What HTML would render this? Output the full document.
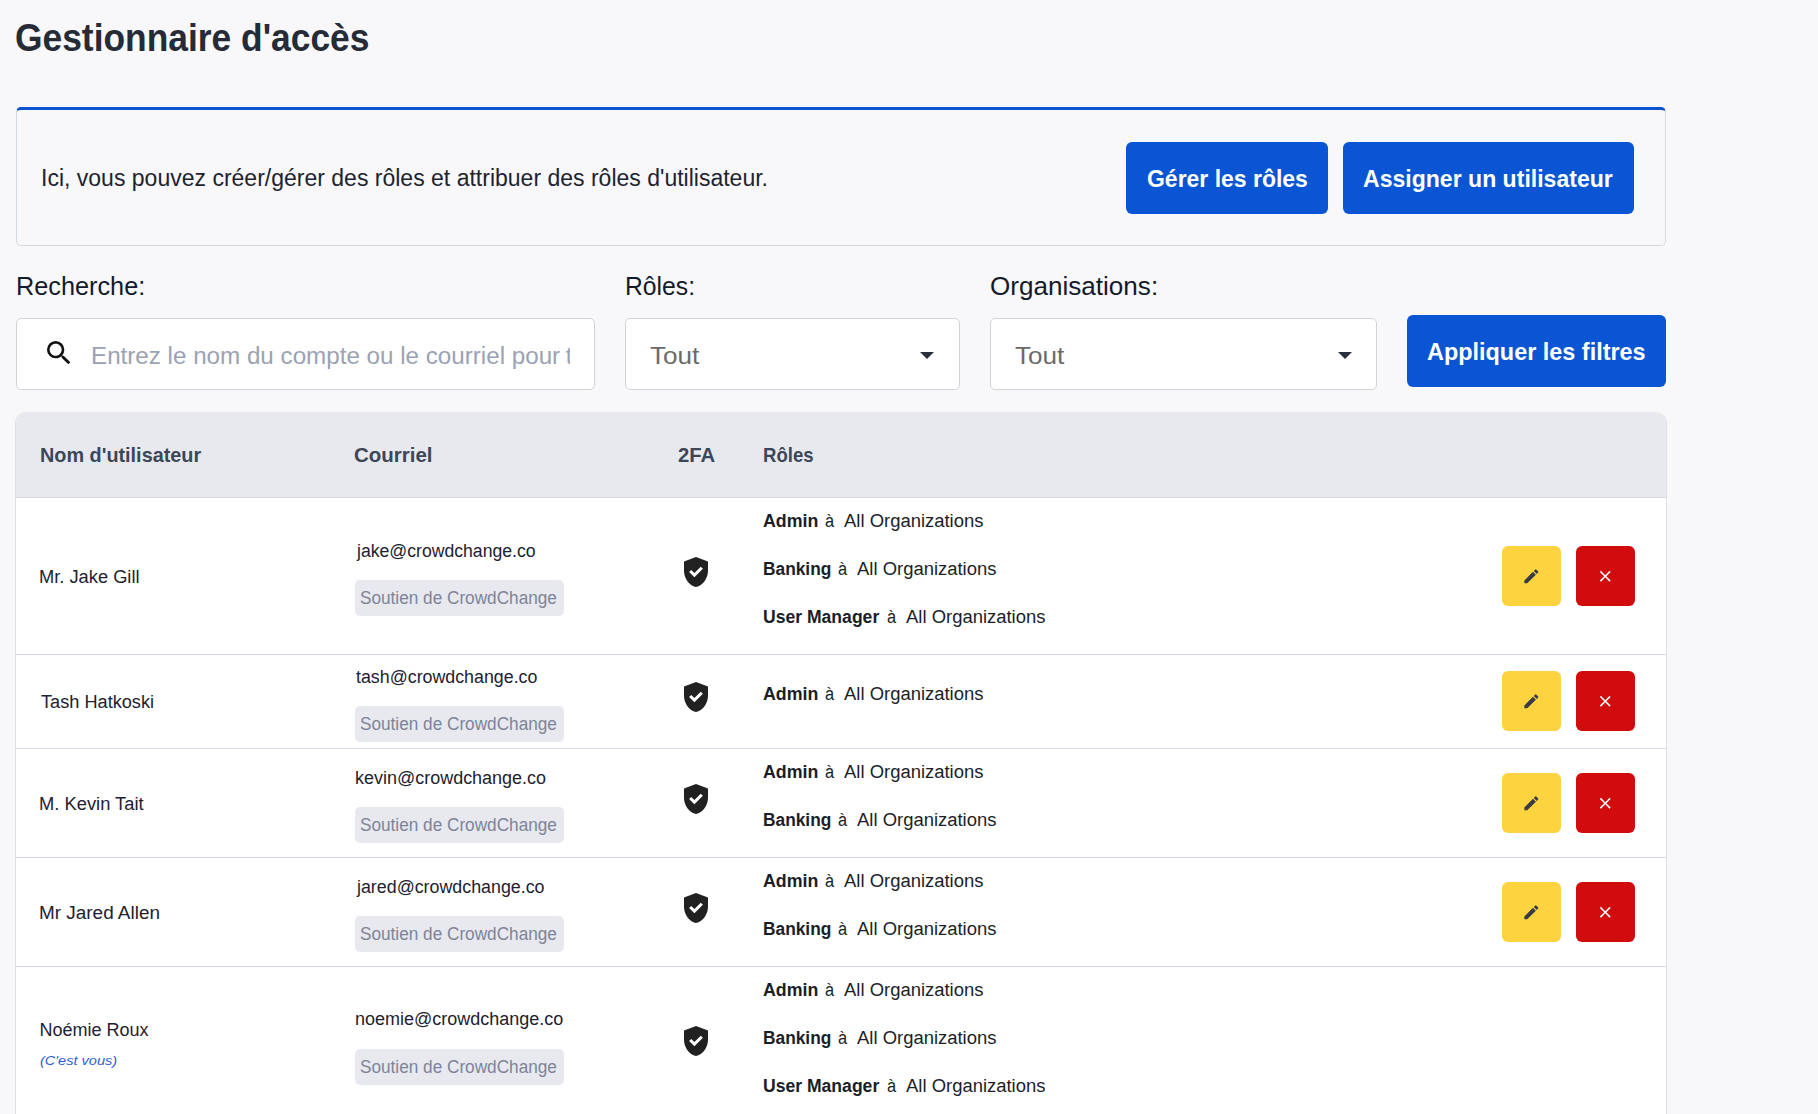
<!DOCTYPE html>
<html><head><meta charset="utf-8"><title>Gestionnaire d'accès</title>
<style>
html,body{margin:0;padding:0;}
body{width:1818px;height:1114px;overflow:hidden;background:#f8f8fa;position:relative;font-family:"Liberation Sans", sans-serif;}
.tx{position:absolute;white-space:pre;line-height:1;transform-origin:0 0;}
.box{position:absolute;box-sizing:border-box;}
#info{left:16px;top:107px;width:1650px;height:139px;border:1px solid #d3d9e1;border-top:3px solid #0b55d4;border-radius:5px;background:#f8f8fa;}
.btn{position:absolute;background:#0955d3;border-radius:6px;}
.inp{position:absolute;box-sizing:border-box;background:#fff;border:1px solid #d2d3d8;border-radius:5px;height:72px;top:318px;}
#table{position:absolute;left:16px;top:413px;width:1650px;height:760px;background:#fff;border-radius:10px 10px 0 0;box-shadow:0 1px 0 0 #dfe1e8, 1px 0 0 0 #dfe1e8, -1px 0 0 0 #dfe1e8, 0 -1px 0 0 #e6e8ed, 0 0 3px rgba(20,30,60,.07);overflow:hidden;}
#thead{position:absolute;left:0;top:0;width:100%;height:84px;background:#e8e9ee;border-bottom:1px solid #d6d9e0;}
.sep{position:absolute;left:16px;width:1650px;height:1px;background:#d5dae3;}
.badge{position:absolute;left:355px;width:209px;height:36px;border-radius:5px;background:#e8e9ee;}
.shield{position:absolute;left:678.2px;fill:#212121;}
.rb{position:absolute;width:59px;height:60px;border-radius:6px;display:flex;align-items:center;justify-content:center;}
.edit{left:1502px;background:#fdd43f;}
.del{left:1576px;background:#d20c0c;}
.arrow{position:absolute;width:0;height:0;border-left:7.3px solid transparent;border-right:7.3px solid transparent;border-top:7.5px solid #2a2f3b;top:352px;}
#clip{position:absolute;left:17px;top:319px;width:553px;height:70px;overflow:hidden;}
</style></head><body>
<div id="info" class="box"></div>
<div class="btn" style="left:1126px;top:142px;width:202px;height:72px"></div>
<div class="btn" style="left:1343px;top:142px;width:291px;height:72px"></div>
<div class="inp" style="left:16px;width:579px"></div>
<div class="inp" style="left:625px;width:335px"></div>
<div class="inp" style="left:990px;width:387px"></div>
<div class="arrow" style="left:919.8px"></div>
<div class="arrow" style="left:1337.5px"></div>
<svg style="position:absolute;left:42.5px;top:336.8px" width="32" height="32" viewBox="0 0 24 24"><path fill="#111" d="M15.5 14h-.79l-.28-.27A6.47 6.47 0 0 0 16 9.5 6.5 6.5 0 1 0 9.5 16c1.61 0 3.09-.59 4.23-1.57l.27.28v.79l5 4.99L20.49 19l-4.99-5zm-6 0C7.01 14 5 11.99 5 9.5S7.01 5 9.5 5 14 7.01 14 9.5 11.99 14 9.5 14z"/></svg>
<div class="btn" style="left:1407px;top:315px;width:259px;height:72px"></div>
<div id="table"><div id="thead"></div></div>
<div class="sep" style="top:654px"></div>
<div class="sep" style="top:748px"></div>
<div class="sep" style="top:857px"></div>
<div class="sep" style="top:966px"></div>
<div class=badge style='top:580px'></div><svg class=shield style='top:554.0px' viewBox='0 0 24 24' width='36' height='36'><path d="M12 2 4 5v6.09c0 5.05 3.41 9.76 8 10.91 4.59-1.15 8-5.86 8-10.91V5l-8-3zm-1.06 13.54L7.4 12l1.41-1.41 2.12 2.12 4.24-4.24 1.41 1.41-5.64 5.66z"/></svg><div class='rb edit' style='top:546px'><svg viewBox='0 0 24 24' width='18.7' height='18.7'><path fill='#3a3b45' d='M3 17.25V21h3.75L17.81 9.94l-3.75-3.75L3 17.25zM20.71 7.04a1 1 0 0 0 0-1.41l-2.34-2.34a1 1 0 0 0-1.41 0l-1.83 1.83 3.75 3.75 1.83-1.83z'/></svg></div><div class='rb del' style='top:546px'><svg viewBox='0 0 24 24' width='18.5' height='18.5'><path fill='#fff' d='M19 6.41 17.59 5 12 10.59 6.41 5 5 6.41 10.59 12 5 17.59 6.41 19 12 13.41 17.59 19 19 17.59 13.41 12z'/></svg></div><div class=badge style='top:706px'></div><svg class=shield style='top:679.0px' viewBox='0 0 24 24' width='36' height='36'><path d="M12 2 4 5v6.09c0 5.05 3.41 9.76 8 10.91 4.59-1.15 8-5.86 8-10.91V5l-8-3zm-1.06 13.54L7.4 12l1.41-1.41 2.12 2.12 4.24-4.24 1.41 1.41-5.64 5.66z"/></svg><div class='rb edit' style='top:671px'><svg viewBox='0 0 24 24' width='18.7' height='18.7'><path fill='#3a3b45' d='M3 17.25V21h3.75L17.81 9.94l-3.75-3.75L3 17.25zM20.71 7.04a1 1 0 0 0 0-1.41l-2.34-2.34a1 1 0 0 0-1.41 0l-1.83 1.83 3.75 3.75 1.83-1.83z'/></svg></div><div class='rb del' style='top:671px'><svg viewBox='0 0 24 24' width='18.5' height='18.5'><path fill='#fff' d='M19 6.41 17.59 5 12 10.59 6.41 5 5 6.41 10.59 12 5 17.59 6.41 19 12 13.41 17.59 19 19 17.59 13.41 12z'/></svg></div><div class=badge style='top:807px'></div><svg class=shield style='top:781.0px' viewBox='0 0 24 24' width='36' height='36'><path d="M12 2 4 5v6.09c0 5.05 3.41 9.76 8 10.91 4.59-1.15 8-5.86 8-10.91V5l-8-3zm-1.06 13.54L7.4 12l1.41-1.41 2.12 2.12 4.24-4.24 1.41 1.41-5.64 5.66z"/></svg><div class='rb edit' style='top:773px'><svg viewBox='0 0 24 24' width='18.7' height='18.7'><path fill='#3a3b45' d='M3 17.25V21h3.75L17.81 9.94l-3.75-3.75L3 17.25zM20.71 7.04a1 1 0 0 0 0-1.41l-2.34-2.34a1 1 0 0 0-1.41 0l-1.83 1.83 3.75 3.75 1.83-1.83z'/></svg></div><div class='rb del' style='top:773px'><svg viewBox='0 0 24 24' width='18.5' height='18.5'><path fill='#fff' d='M19 6.41 17.59 5 12 10.59 6.41 5 5 6.41 10.59 12 5 17.59 6.41 19 12 13.41 17.59 19 19 17.59 13.41 12z'/></svg></div><div class=badge style='top:916px'></div><svg class=shield style='top:890.0px' viewBox='0 0 24 24' width='36' height='36'><path d="M12 2 4 5v6.09c0 5.05 3.41 9.76 8 10.91 4.59-1.15 8-5.86 8-10.91V5l-8-3zm-1.06 13.54L7.4 12l1.41-1.41 2.12 2.12 4.24-4.24 1.41 1.41-5.64 5.66z"/></svg><div class='rb edit' style='top:882px'><svg viewBox='0 0 24 24' width='18.7' height='18.7'><path fill='#3a3b45' d='M3 17.25V21h3.75L17.81 9.94l-3.75-3.75L3 17.25zM20.71 7.04a1 1 0 0 0 0-1.41l-2.34-2.34a1 1 0 0 0-1.41 0l-1.83 1.83 3.75 3.75 1.83-1.83z'/></svg></div><div class='rb del' style='top:882px'><svg viewBox='0 0 24 24' width='18.5' height='18.5'><path fill='#fff' d='M19 6.41 17.59 5 12 10.59 6.41 5 5 6.41 10.59 12 5 17.59 6.41 19 12 13.41 17.59 19 19 17.59 13.41 12z'/></svg></div><div class=badge style='top:1049px'></div><svg class=shield style='top:1023.0px' viewBox='0 0 24 24' width='36' height='36'><path d="M12 2 4 5v6.09c0 5.05 3.41 9.76 8 10.91 4.59-1.15 8-5.86 8-10.91V5l-8-3zm-1.06 13.54L7.4 12l1.41-1.41 2.12 2.12 4.24-4.24 1.41 1.41-5.64 5.66z"/></svg>
<span class=tx style='left:15.16px;top:19.00px;font-size:38.5px;font-weight:700;font-style:normal;color:#252b37;transform:scaleX(0.9188)'>Gestionnaire d'accès</span><span class=tx style='left:41.00px;top:167.00px;font-size:23px;font-weight:400;font-style:normal;color:#1e2330;transform:scaleX(1.0004)'>Ici, vous pouvez créer/gérer des rôles et attribuer des rôles d'utilisateur.</span><span class=tx style='left:1146.66px;top:167.00px;font-size:24.5px;font-weight:700;font-style:normal;color:#ffffff;transform:scaleX(0.9376)'>Gérer les rôles</span><span class=tx style='left:1362.96px;top:167.00px;font-size:24.5px;font-weight:700;font-style:normal;color:#ffffff;transform:scaleX(0.9409)'>Assigner un utilisateur</span><span class=tx style='left:15.86px;top:273.00px;font-size:26px;font-weight:400;font-style:normal;color:#131a2a;transform:scaleX(0.9721)'>Recherche:</span><span class=tx style='left:625.40px;top:273.00px;font-size:26px;font-weight:400;font-style:normal;color:#131a2a;transform:scaleX(0.9500)'>Rôles:</span><span class=tx style='left:989.50px;top:273.00px;font-size:26px;font-weight:400;font-style:normal;color:#131a2a;transform:scaleX(1.0030)'>Organisations:</span><div id='clip'><span class=tx style='left:74.44px;top:26.00px;font-size:23.5px;font-weight:400;font-style:normal;color:#9aa2b3;transform:scaleX(1.0291)'>Entrez le nom du compte ou le courriel pour</span><span class=tx style='left:548.64px;top:26.00px;font-size:23.5px;color:#9aa2b3'>t</span></div><span class=tx style='left:650.20px;top:345.00px;font-size:23.5px;font-weight:400;font-style:normal;color:#6a6a6a;transform:scaleX(1.1114)'>Tout</span><span class=tx style='left:1015.20px;top:345.00px;font-size:23.5px;font-weight:400;font-style:normal;color:#6a6a6a;transform:scaleX(1.1114)'>Tout</span><span class=tx style='left:1426.64px;top:340.00px;font-size:24.5px;font-weight:700;font-style:normal;color:#ffffff;transform:scaleX(0.9559)'>Appliquer les filtres</span><span class=tx style='left:40.06px;top:444.00px;font-size:21px;font-weight:700;font-style:normal;color:#3b4759;transform:scaleX(0.9441)'>Nom d'utilisateur</span><span class=tx style='left:354.12px;top:444.00px;font-size:21px;font-weight:700;font-style:normal;color:#3b4759;transform:scaleX(0.9756)'>Courriel</span><span class=tx style='left:677.84px;top:444.00px;font-size:21px;font-weight:700;font-style:normal;color:#3b4759;transform:scaleX(0.9649)'>2FA</span><span class=tx style='left:762.92px;top:444.00px;font-size:21px;font-weight:700;font-style:normal;color:#3b4759;transform:scaleX(0.8839)'>Rôles</span><span class=tx style='left:39.48px;top:568.00px;font-size:18px;font-weight:400;font-style:normal;color:#1d2130;transform:scaleX(1.0155)'>Mr. Jake Gill</span><span class=tx style='left:356.78px;top:542.00px;font-size:18px;font-weight:400;font-style:normal;color:#1d2130;transform:scaleX(0.9792)'>jake@crowdchange.co</span><span class=tx style='left:360.44px;top:589.00px;font-size:18px;font-weight:400;font-style:normal;color:#7d8499;transform:scaleX(0.9551)'>Soutien de CrowdChange</span><span class=tx style='left:762.61px;top:512.00px;font-size:18px;font-weight:700;font-style:normal;color:#1b1e28;transform:scaleX(0.9870)'>Admin</span><span class=tx style='left:825.19px;top:512.00px;font-size:18px;font-weight:400;font-style:normal;color:#1b1e28;transform:scaleX(0.9111)'>à</span><span class=tx style='left:843.60px;top:512.00px;font-size:18px;font-weight:400;font-style:normal;color:#1b1e28;transform:scaleX(1.0250)'>All Organizations</span><span class=tx style='left:762.64px;top:560.00px;font-size:18px;font-weight:700;font-style:normal;color:#1b1e28;transform:scaleX(0.9623)'>Banking</span><span class=tx style='left:838.29px;top:560.00px;font-size:18px;font-weight:400;font-style:normal;color:#1b1e28;transform:scaleX(0.9111)'>à</span><span class=tx style='left:856.70px;top:560.00px;font-size:18px;font-weight:400;font-style:normal;color:#1b1e28;transform:scaleX(1.0250)'>All Organizations</span><span class=tx style='left:762.62px;top:608.00px;font-size:18px;font-weight:700;font-style:normal;color:#1b1e28;transform:scaleX(0.9763)'>User Manager</span><span class=tx style='left:887.09px;top:608.00px;font-size:18px;font-weight:400;font-style:normal;color:#1b1e28;transform:scaleX(0.9111)'>à</span><span class=tx style='left:905.50px;top:608.00px;font-size:18px;font-weight:400;font-style:normal;color:#1b1e28;transform:scaleX(1.0250)'>All Organizations</span><span class=tx style='left:40.50px;top:693.00px;font-size:18px;font-weight:400;font-style:normal;color:#1d2130;transform:scaleX(1.0090)'>Tash Hatkoski</span><span class=tx style='left:355.80px;top:668.00px;font-size:18px;font-weight:400;font-style:normal;color:#1d2130;transform:scaleX(0.9891)'>tash@crowdchange.co</span><span class=tx style='left:360.44px;top:715.00px;font-size:18px;font-weight:400;font-style:normal;color:#7d8499;transform:scaleX(0.9551)'>Soutien de CrowdChange</span><span class=tx style='left:762.61px;top:685.00px;font-size:18px;font-weight:700;font-style:normal;color:#1b1e28;transform:scaleX(0.9870)'>Admin</span><span class=tx style='left:825.19px;top:685.00px;font-size:18px;font-weight:400;font-style:normal;color:#1b1e28;transform:scaleX(0.9111)'>à</span><span class=tx style='left:843.60px;top:685.00px;font-size:18px;font-weight:400;font-style:normal;color:#1b1e28;transform:scaleX(1.0250)'>All Organizations</span><span class=tx style='left:39.48px;top:795.40px;font-size:18px;font-weight:400;font-style:normal;color:#1d2130;transform:scaleX(1.0186)'>M. Kevin Tait</span><span class=tx style='left:354.80px;top:768.70px;font-size:18px;font-weight:400;font-style:normal;color:#1d2130;transform:scaleX(0.9984)'>kevin@crowdchange.co</span><span class=tx style='left:360.44px;top:816.00px;font-size:18px;font-weight:400;font-style:normal;color:#7d8499;transform:scaleX(0.9551)'>Soutien de CrowdChange</span><span class=tx style='left:762.61px;top:763.00px;font-size:18px;font-weight:700;font-style:normal;color:#1b1e28;transform:scaleX(0.9870)'>Admin</span><span class=tx style='left:825.19px;top:763.00px;font-size:18px;font-weight:400;font-style:normal;color:#1b1e28;transform:scaleX(0.9111)'>à</span><span class=tx style='left:843.60px;top:763.00px;font-size:18px;font-weight:400;font-style:normal;color:#1b1e28;transform:scaleX(1.0250)'>All Organizations</span><span class=tx style='left:762.64px;top:811.00px;font-size:18px;font-weight:700;font-style:normal;color:#1b1e28;transform:scaleX(0.9623)'>Banking</span><span class=tx style='left:838.29px;top:811.00px;font-size:18px;font-weight:400;font-style:normal;color:#1b1e28;transform:scaleX(0.9111)'>à</span><span class=tx style='left:856.70px;top:811.00px;font-size:18px;font-weight:400;font-style:normal;color:#1b1e28;transform:scaleX(1.0250)'>All Organizations</span><span class=tx style='left:39.45px;top:904.30px;font-size:18px;font-weight:400;font-style:normal;color:#1d2130;transform:scaleX(1.0513)'>Mr Jared Allen</span><span class=tx style='left:356.79px;top:878.00px;font-size:18px;font-weight:400;font-style:normal;color:#1d2130;transform:scaleX(0.9900)'>jared@crowdchange.co</span><span class=tx style='left:360.44px;top:925.00px;font-size:18px;font-weight:400;font-style:normal;color:#7d8499;transform:scaleX(0.9551)'>Soutien de CrowdChange</span><span class=tx style='left:762.61px;top:872.00px;font-size:18px;font-weight:700;font-style:normal;color:#1b1e28;transform:scaleX(0.9870)'>Admin</span><span class=tx style='left:825.19px;top:872.00px;font-size:18px;font-weight:400;font-style:normal;color:#1b1e28;transform:scaleX(0.9111)'>à</span><span class=tx style='left:843.60px;top:872.00px;font-size:18px;font-weight:400;font-style:normal;color:#1b1e28;transform:scaleX(1.0250)'>All Organizations</span><span class=tx style='left:762.64px;top:920.00px;font-size:18px;font-weight:700;font-style:normal;color:#1b1e28;transform:scaleX(0.9623)'>Banking</span><span class=tx style='left:838.29px;top:920.00px;font-size:18px;font-weight:400;font-style:normal;color:#1b1e28;transform:scaleX(0.9111)'>à</span><span class=tx style='left:856.70px;top:920.00px;font-size:18px;font-weight:400;font-style:normal;color:#1b1e28;transform:scaleX(1.0250)'>All Organizations</span><span class=tx style='left:39.50px;top:1020.75px;font-size:18px;font-weight:400;font-style:normal;color:#1d2130;transform:scaleX(1.0000)'>Noémie Roux</span><span class=tx style='left:354.80px;top:1010.40px;font-size:18px;font-weight:400;font-style:normal;color:#1d2130;transform:scaleX(0.9990)'>noemie@crowdchange.co</span><span class=tx style='left:360.44px;top:1058.00px;font-size:18px;font-weight:400;font-style:normal;color:#7d8499;transform:scaleX(0.9551)'>Soutien de CrowdChange</span><span class=tx style='left:762.61px;top:981.00px;font-size:18px;font-weight:700;font-style:normal;color:#1b1e28;transform:scaleX(0.9870)'>Admin</span><span class=tx style='left:825.19px;top:981.00px;font-size:18px;font-weight:400;font-style:normal;color:#1b1e28;transform:scaleX(0.9111)'>à</span><span class=tx style='left:843.60px;top:981.00px;font-size:18px;font-weight:400;font-style:normal;color:#1b1e28;transform:scaleX(1.0250)'>All Organizations</span><span class=tx style='left:762.64px;top:1029.00px;font-size:18px;font-weight:700;font-style:normal;color:#1b1e28;transform:scaleX(0.9623)'>Banking</span><span class=tx style='left:838.29px;top:1029.00px;font-size:18px;font-weight:400;font-style:normal;color:#1b1e28;transform:scaleX(0.9111)'>à</span><span class=tx style='left:856.70px;top:1029.00px;font-size:18px;font-weight:400;font-style:normal;color:#1b1e28;transform:scaleX(1.0250)'>All Organizations</span><span class=tx style='left:762.62px;top:1077.00px;font-size:18px;font-weight:700;font-style:normal;color:#1b1e28;transform:scaleX(0.9763)'>User Manager</span><span class=tx style='left:887.09px;top:1077.00px;font-size:18px;font-weight:400;font-style:normal;color:#1b1e28;transform:scaleX(0.9111)'>à</span><span class=tx style='left:905.50px;top:1077.00px;font-size:18px;font-weight:400;font-style:normal;color:#1b1e28;transform:scaleX(1.0250)'>All Organizations</span><span class=tx style='left:40.38px;top:1053.90px;font-size:13px;font-weight:400;font-style:italic;color:#2f5fd0;transform:scaleX(1.1179)'>(C'est vous)</span>
</body></html>
